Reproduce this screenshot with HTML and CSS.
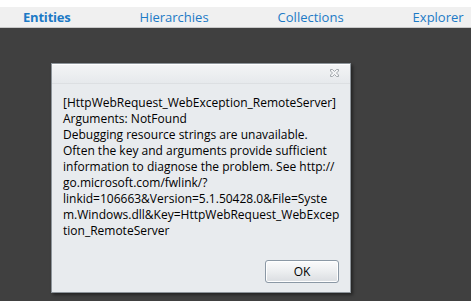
FILE: index.html
```html
<!DOCTYPE html>
<html lang="en">
<head>
    <meta charset="UTF-8">
    <title>Error</title>
    <link rel="stylesheet" href="styles.css">
</head>
<body>
    <div class="top-strip"></div>
    <nav class="tabs">
        <a class="tab active">Entities</a>
        <a class="tab">Hierarchies</a>
        <a class="tab">Collections</a>
        <a class="tab">Explorer</a>
    </nav>

    <div class="stage">
        <div class="dialog">
            <div class="dialog-header">
                <svg class="close" width="9" height="8" viewBox="0 0 9 8">
                    <path d="M0.5 0.5h2l2 2 2-2h2v1.5l-2 2 2 2v1.5h-2l-2-2-2 2h-2v-1.5l2-2-2-2z" fill="#f4f5f6" stroke="#a3a8ad" stroke-width="1"/>
                </svg>
            </div>
            <div class="dialog-body">
                <p class="message">[HttpWebRequest_WebException_RemoteServer]<br>Arguments: NotFound<br>Debugging resource strings are unavailable.<br>Often the key and arguments provide sufficient<br>information to diagnose the problem. See http://<br>go.microsoft.com/fwlink/?<br>linkid=106663&amp;Version=5.1.50428.0&amp;File=Syste<br>m.Windows.dll&amp;Key=HttpWebRequest_WebExcep<br>tion_RemoteServer</p>
                <div class="actions">
                    <button class="ok">OK</button>
                </div>
            </div>
        </div>
    </div>
</body>
</html>
```

FILE: styles.css
```css
body {
    margin: 0;
    background-color: #404040;
    font-family: "Open Sans", "Noto Sans", sans-serif;
    height: 301px;
    overflow: hidden;
}

.top-strip {
    height: 7px;
    background-color: #ffffff;
}

.tabs {
    display: flex;
    gap: 69px;
    height: 20px;
    padding-left: 23px;
    align-items: center;
    background-color: #f0f0f0;
    border-bottom: 1px solid #c8c8c8;
}

.tab {
    font-size: 13px;
    color: #1c7ac6;
}

.tab.active {
    font-weight: bold;
    letter-spacing: -0.2px;
}

.stage {
    padding: 35px 0 0 51px;
}

.dialog {
    width: 298px;
    height: 228px;
    border: 1px solid #8d949a;
    background-color: #e8ebee;
    box-shadow: 2px 2px 3px rgba(0, 0, 0, 0.45);
}

.dialog-header {
    height: 14px;
    border-top: 1px solid #ffffff;
    border-bottom: 1px solid #dcdfe2;
    background: linear-gradient(#f3f4f5, #e6e9ec);
    display: flex;
    justify-content: flex-end;
    align-items: flex-start;
    padding: 4px 11px 0 0;
}

.close {
    display: block;
}

.dialog-body {
    padding: 11px 11px 0 11px;
}

.message {
    margin: 0;
    font-size: 12px;
    line-height: 16px;
    color: #000000;
    white-space: nowrap;
}

.actions {
    display: flex;
    justify-content: flex-end;
    margin-top: 21px;
}

.ok {
    width: 74px;
    height: 23px;
    border: 1px solid #8b98a5;
    border-radius: 3px;
    background: linear-gradient(#fbfbfc, #eceef0 50%, #dadde1);
    font-family: "Open Sans", "Noto Sans", sans-serif;
    font-size: 12px;
    color: #000000;
    padding: 0;
    box-shadow: inset 0 0 0 1px #ffffff;
}
```
